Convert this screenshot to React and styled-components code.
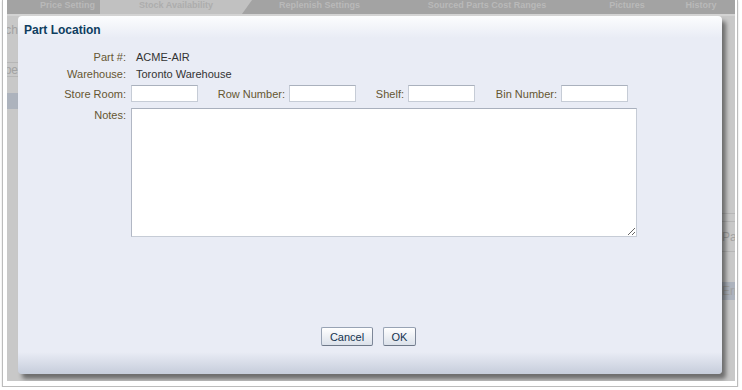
import React from "react";
import styled, { createGlobalStyle } from "styled-components";

const Global = createGlobalStyle`
  html, body { margin: 0; padding: 0; background: #ffffff; }
  body {
    font-family: "Liberation Sans", Arial, sans-serif;
    font-size: 11px;
    overflow: hidden;
  }
`;

const Frame = styled.div`
  width: 728px;
  margin-left: 2px;
  padding: 0 2px 5px 4px;
  border: 1px solid #bcbcbc;
  border-top: none;
  box-shadow: 0 1px 2px rgba(0,0,0,0.15);
`;

const Screen = styled.div`
  position: relative;
  width: 728px;
  height: 381px;
  overflow: hidden;
  background: #c8c8c8;
  display: flex;
  flex-direction: column;
`;

const TabStrip = styled.div`
  height: 14px;
  display: flex;
  background: #a3a3a3;
  border-bottom: 2px solid #d3d3d3;
  overflow: hidden;
`;

const Tab = styled.div`
  width: ${(p) => p.w}px;
  flex-shrink: 0;
  font-size: 9px;
  font-weight: bold;
  line-height: 11px;
  color: ${(p) => (p.active ? "#adadad" : "#b9b9b9")};
  background: ${(p) => (p.active ? "#c1c1c1" : "transparent")};
  clip-path: ${(p) =>
    p.active ? "polygon(0 0, 100% 0, calc(100% - 10px) 100%, 0 100%)" : "none"};
  text-align: ${(p) => p.align || "center"};
  white-space: nowrap;
`;

const Panes = styled.div`
  flex: 1;
  display: flex;
  justify-content: space-between;
`;

const Pane = styled.div`
  width: ${(p) => p.w}px;
  overflow: hidden;
  display: flex;
  flex-direction: column;
`;

const PaneRow = styled.div`
  height: ${(p) => p.h}px;
  flex-shrink: 0;
  box-sizing: border-box;
  border-bottom: ${(p) => (p.line ? "1px solid #b6b6b6" : "none")};
  background: ${(p) => (p.sel ? "#adb3bd" : "transparent")};
  color: #a2a2a2;
  font-size: 12px;
  white-space: nowrap;
  display: flex;
  align-items: ${(p) => p.valign || "center"};
  justify-content: ${(p) => (p.right ? "flex-end" : "flex-start")};
  padding-top: ${(p) => p.pt || 0}px;
`;

const Dialog = styled.div`
  position: absolute;
  left: 11px;
  top: 16px;
  width: 704px;
  height: 358px;
  border-radius: 4px;
  background: linear-gradient(
    to bottom,
    #fcfdfe 0px,
    #e9ecf5 22px,
    #e9ecf5 336px,
    #c6cddb 358px
  );
  box-shadow: 4px 5px 4px rgba(0, 0, 0, 0.45);
  display: flex;
  flex-direction: column;
`;

const Title = styled.div`
  padding: 7px 0 0 6px;
  font-size: 12px;
  font-weight: bold;
  line-height: 14px;
  color: #0e3d5f;
`;

const Form = styled.div`
  margin-top: 11px;
  padding-left: 8px;
  display: flex;
  flex-direction: column;
`;

const Row = styled.div`
  display: flex;
  align-items: ${(p) => (p.top ? "flex-start" : "center")};
  height: ${(p) => (p.h ? p.h + "px" : "auto")};
  margin-top: ${(p) => p.mt || 0}px;
`;

const Label = styled.div`
  width: 100px;
  flex-shrink: 0;
  text-align: right;
  color: #655631;
  margin-right: 5px;
  padding-top: ${(p) => p.pt || 0}px;
  white-space: nowrap;
`;

const SubLabel = styled.div`
  width: ${(p) => p.w}px;
  flex-shrink: 0;
  text-align: right;
  color: #655631;
  margin-right: 4px;
  white-space: nowrap;
`;

const Value = styled.div`
  padding-left: 5px;
  color: #333333;
`;

const Input = styled.input`
  width: 67px;
  height: 17px;
  box-sizing: border-box;
  margin: 0;
  padding: 0 2px;
  border: 1px solid #c6ccd6;
  border-top-color: #aab1bd;
  background: #ffffff;
  font-family: inherit;
  font-size: 11px;
  outline: none;
`;

const Notes = styled.textarea`
  width: 506px;
  height: 129px;
  box-sizing: border-box;
  margin: 0;
  padding: 2px;
  border: 1px solid #c6ccd6;
  border-top-color: #a9b0bd;
  border-left-color: #b1b7c4;
  background: #ffffff;
  font-family: inherit;
  font-size: 11px;
  resize: both;
  outline: none;
`;

const ButtonBar = styled.div`
  margin-top: auto;
  padding: 0 3px 28px 0;
  display: flex;
  justify-content: center;
  gap: 10px;
`;

const Button = styled.button`
  width: ${(p) => p.w}px;
  height: 19px;
  box-sizing: border-box;
  margin: 0;
  padding: 0;
  font-family: inherit;
  font-size: 11px;
  color: #15344f;
  border: 1px solid #98a3b4;
  border-right-color: #7d8798;
  border-bottom-color: #6e7888;
  border-radius: 2px;
  background: linear-gradient(to bottom, #ffffff, #dbe1ea);
`;

export default function App() {
  return (
    <>
      <Global />
      <Frame>
        <Screen>
          <TabStrip>
            <Tab w={93} align="right">Price Setting&nbsp;&nbsp;</Tab>
            <Tab w={152} active>Stock Availability</Tab>
            <Tab w={135}>Replenish Settings</Tab>
            <Tab w={200}>Sourced Parts Cost Ranges</Tab>
            <Tab w={80}>Pictures</Tab>
            <Tab w={68}>History</Tab>
          </TabStrip>
          <Panes>
            <Pane w={11}>
              <PaneRow h={47} right valign="flex-start" pt={7} line>Search</PaneRow>
              <PaneRow h={14} right line>Type</PaneRow>
              <PaneRow h={16} />
              <PaneRow h={16} sel />
            </Pane>
            <Pane w={13}>
              <PaneRow h={198} line />
              <PaneRow h={8} line />
              <PaneRow h={30} line>Part</PaneRow>
              <PaneRow h={30} />
              <PaneRow h={18} sel>Error</PaneRow>
            </Pane>
          </Panes>

          <Dialog>
            <Title>Part Location</Title>
            <Form>
              <Row h={17}>
                <Label>Part #:</Label>
                <Value>ACME-AIR</Value>
              </Row>
              <Row h={17}>
                <Label>Warehouse:</Label>
                <Value>Toronto Warehouse</Value>
              </Row>
              <Row h={17} mt={3}>
                <Label>Store Room:</Label>
                <Input />
                <SubLabel w={87}>Row Number:</SubLabel>
                <Input />
                <SubLabel w={48}>Shelf:</SubLabel>
                <Input />
                <SubLabel w={82}>Bin Number:</SubLabel>
                <Input />
              </Row>
              <Row top mt={6}>
                <Label pt={1}>Notes:</Label>
                <Notes />
              </Row>
            </Form>
            <ButtonBar>
              <Button w={52}>Cancel</Button>
              <Button w={33}>OK</Button>
            </ButtonBar>
          </Dialog>
        </Screen>
      </Frame>
    </>
  );
}
